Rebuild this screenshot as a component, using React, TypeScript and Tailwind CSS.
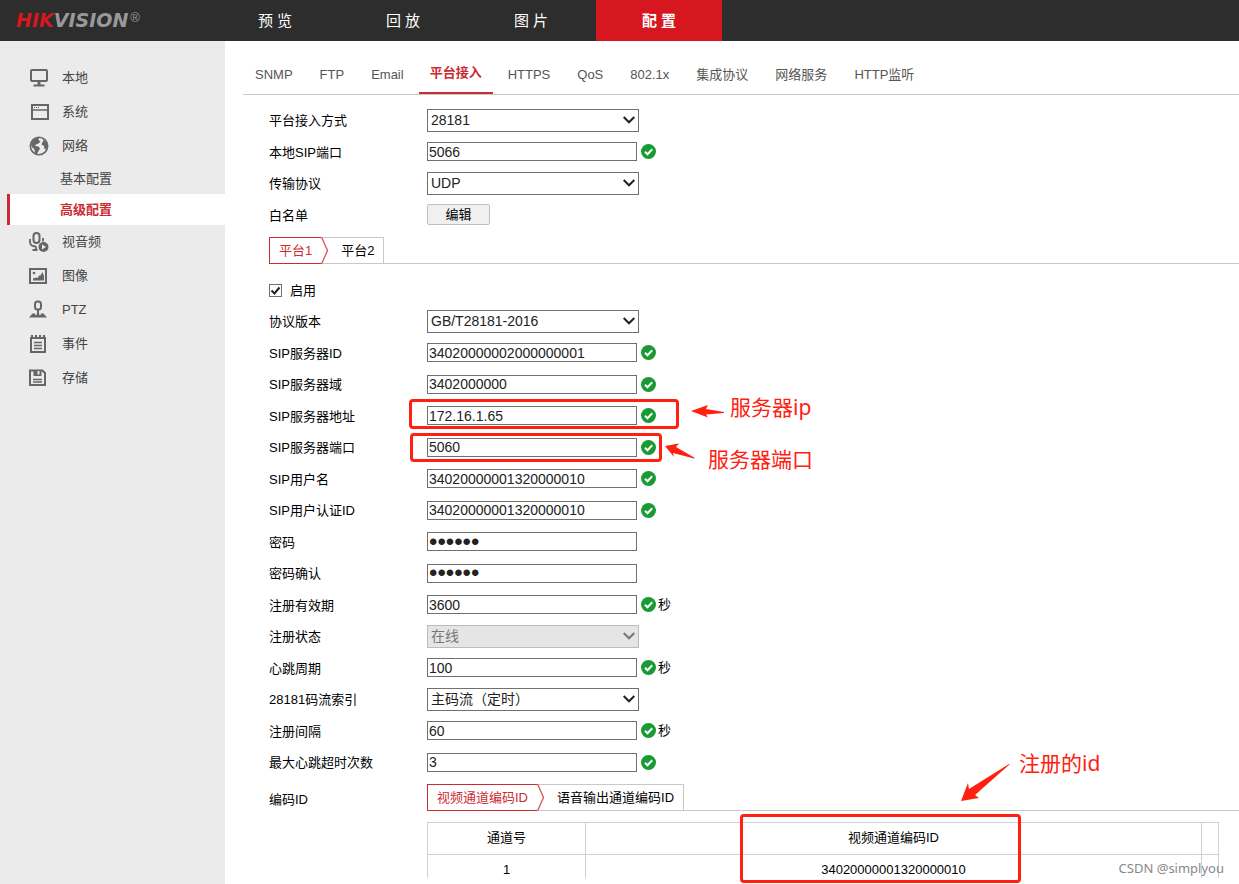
import { useState } from "react";
import type { ReactNode } from "react";

interface Field {
  id: string;
  label: string;
  type: "text" | "password" | "select";
  value: string;
  options?: string[];
  checked?: boolean;
  unit?: string;
  disabled?: boolean;
}

const NAV_ITEMS = ["预 览", "回 放", "图 片", "配 置"];

const SUB_TABS = [
  "SNMP",
  "FTP",
  "Email",
  "平台接入",
  "HTTPS",
  "QoS",
  "802.1x",
  "集成协议",
  "网络服务",
  "HTTP监听",
];

const ACCESS_FIELDS: Field[] = [
  { id: "access-mode", label: "平台接入方式", type: "select", value: "28181", options: ["28181"] },
  { id: "local-port", label: "本地SIP端口", type: "text", value: "5066", checked: true },
  { id: "protocol", label: "传输协议", type: "select", value: "UDP", options: ["UDP", "TCP"] },
];

const PLATFORM_FIELDS: Field[] = [
  { id: "version", label: "协议版本", type: "select", value: "GB/T28181-2016", options: ["GB/T28181-2016", "GB/T28181-2011"] },
  { id: "server-id", label: "SIP服务器ID", type: "text", value: "34020000002000000001", checked: true },
  { id: "server-domain", label: "SIP服务器域", type: "text", value: "3402000000", checked: true },
  { id: "server-address", label: "SIP服务器地址", type: "text", value: "172.16.1.65", checked: true },
  { id: "server-port", label: "SIP服务器端口", type: "text", value: "5060", checked: true },
  { id: "username", label: "SIP用户名", type: "text", value: "34020000001320000010", checked: true },
  { id: "auth-id", label: "SIP用户认证ID", type: "text", value: "34020000001320000010", checked: true },
  { id: "password", label: "密码", type: "password", value: "123456" },
  { id: "password-confirm", label: "密码确认", type: "password", value: "123456" },
  { id: "expires", label: "注册有效期", type: "text", value: "3600", checked: true, unit: "秒" },
  { id: "status", label: "注册状态", type: "select", value: "在线", options: ["在线", "离线"], disabled: true },
  { id: "heartbeat", label: "心跳周期", type: "text", value: "100", checked: true, unit: "秒" },
  { id: "stream", label: "28181码流索引", type: "select", value: "主码流（定时）", options: ["主码流（定时）", "子码流"] },
  { id: "interval", label: "注册间隔", type: "text", value: "60", checked: true, unit: "秒" },
  { id: "max-timeout", label: "最大心跳超时次数", type: "text", value: "3", checked: true },
];

function Icon({ children }: { children: ReactNode }) {
  return (
    <svg className="h-5 w-5 shrink-0" viewBox="0 0 20 20" fill="none" stroke="#666" strokeWidth="2" aria-hidden="true">
      {children}
    </svg>
  );
}

const monitorIcon = (
  <Icon>
    <rect x="2" y="2" width="16" height="11" rx="1" />
    <path d="M10 13v4" strokeWidth="3" />
    <path d="M4.500 17.500h11" />
  </Icon>
);

const windowIcon = (
  <Icon>
    <rect x="3" y="3" width="16" height="14" />
    <path d="M3 8h16" strokeWidth="1.500" />
    <path d="M5 5.500h5" strokeDasharray="1 1" strokeWidth="1" />
  </Icon>
);

const globeIcon = (
  <Icon>
    <circle cx="10" cy="10" r="8.700" strokeWidth="1.600" />
    <path
      d="M2 8l3-5 5-1.500-.5 2.500 2 1.500-2 2-2.500 1-1 1.500 3.500.5 1.500 2-2 3.500-1.500 2.500-1.500-1-.5-4-3-3zM13 2.500l4.500 4 1 4-1.500 3-1.500-.5-.5-3-2.500-1.500 1-2.500 1-1z"
      fill="#666"
      stroke="none"
    />
  </Icon>
);

const microphoneIcon = (
  <Icon>
    <rect x="4.500" y="1" width="6" height="10" rx="3" />
    <path d="M1 7v3c0 3 2 4.500 6 4.500M14 6v3.500M7 14.500v3.500M3.500 18h5" strokeWidth="1.800" />
    <circle cx="14.500" cy="15" r="5" fill="#666" stroke="none" />
    <path d="M13 12.500v5l4-2.500z" fill="#ebebeb" stroke="none" />
  </Icon>
);

const pictureIcon = (
  <Icon>
    <rect x="1" y="3" width="16" height="14" />
    <path d="M4 14.500v-2l3-1 2 .5 1-3 1 1 2.500-4 1.500 4v4.500z" fill="#666" stroke="none" />
    <circle cx="5" cy="7" r="1.300" fill="#666" stroke="none" />
  </Icon>
);

const joystickIcon = (
  <Icon>
    <rect x="6" y="1.500" width="6" height="8" rx="2.500" />
    <path d="M3.500 13.500h11l3.500 4H0z" fill="#666" stroke="none" />
    <path d="M6 14h6" stroke="#ebebeb" strokeWidth="1.500" />
    <path d="M9 10v5.500" />
  </Icon>
);

const notepadIcon = (
  <Icon>
    <rect x="2" y="4" width="14" height="14" />
    <path d="M3 1v3M7 1v3M11 1v3M15 1v3" />
    <path d="M5 8.500h8M5 11.500h8M5 14.500h8" strokeWidth="1.300" />
  </Icon>
);

const floppyIcon = (
  <Icon>
    <path d="M1 2.500h12.500L16 5v12H1z" />
    <path d="M4.500 2v6h8V2" fill="#666" stroke="none" />
    <path d="M9.500 3v3.500" stroke="#ebebeb" />
    <path d="M4 11.500h9M4 14h9" strokeWidth="1.500" />
  </Icon>
);

const TOP_MENU = [
  { label: "本地", icon: monitorIcon },
  { label: "系统", icon: windowIcon },
  { label: "网络", icon: globeIcon },
];

const BOTTOM_MENU = [
  { label: "视音频", icon: microphoneIcon },
  { label: "图像", icon: pictureIcon },
  { label: "PTZ", icon: joystickIcon },
  { label: "事件", icon: notepadIcon },
  { label: "存储", icon: floppyIcon },
];

function MenuItem({ label, icon }: { label: string; icon: ReactNode }) {
  return (
    <a href="#" className="flex h-[34px] items-center gap-[13px] pl-[29px] text-[#444]">
      {icon}
      {label}
    </a>
  );
}

function Sidebar() {
  return (
    <aside className="w-[225px] shrink-0 bg-[#ebebeb] pt-5">
      {TOP_MENU.map((item) => (
        <MenuItem key={item.label} {...item} />
      ))}
      <a href="#" className="flex h-[31px] items-center pl-[60px] text-[#444]">
        基本配置
      </a>
      <a
        href="#"
        className="ml-[7px] flex h-[31px] items-center border-l-3 border-[#cc2b33] bg-white pl-[50px] font-bold text-[#cc2b33]"
      >
        高级配置
      </a>
      {BOTTOM_MENU.map((item) => (
        <MenuItem key={item.label} {...item} />
      ))}
    </aside>
  );
}

function CheckMark() {
  return (
    <svg className="ml-1 h-[15px] w-[15px] shrink-0" viewBox="0 0 15 15" aria-hidden="true">
      <circle cx="7.500" cy="7.500" r="7.500" fill="#199b33" />
      <path d="M4 7.700l2.500 2.500 4.700-4.900" fill="none" stroke="#fff" strokeWidth="2" />
    </svg>
  );
}

function FieldRow({ field }: { field: Field }) {
  const [value, setValue] = useState(field.value);

  return (
    <div className="flex h-8 items-center even:h-[31px]">
      <label htmlFor={field.id} className="w-[158px] shrink-0 pt-0.5">
        {field.label}
      </label>
      {field.type === "select" ? (
        <div className="relative">
          <select
            id={field.id}
            value={value}
            disabled={field.disabled}
            onChange={(e) => setValue(e.target.value)}
            className="block h-[23px] w-[212px] appearance-none border border-[#707070] bg-white pl-[3px] text-sm leading-5 text-[#222] disabled:border-[#bbb] disabled:bg-[#e5e5e5] disabled:text-[#777]"
          >
            {field.options?.map((option) => (
              <option key={option}>{option}</option>
            ))}
          </select>
          <svg
            className="pointer-events-none absolute top-[7px] right-1 h-2 w-3"
            viewBox="0 0 12 8"
            fill="none"
            stroke={field.disabled ? "#777" : "#222"}
            strokeWidth="2"
            aria-hidden="true"
          >
            <path d="M.7 1L6 6.300 11.300 1" />
          </svg>
        </div>
      ) : (
        <input
          id={field.id}
          type={field.type}
          value={value}
          onChange={(e) => setValue(e.target.value)}
          className={
            field.type === "password"
              ? "h-[19px] w-[210px] border border-[#707070] pl-px text-2xl leading-4 text-[#222]"
              : "h-[19px] w-[210px] border border-[#707070] pl-px text-sm leading-4 text-[#222]"
          }
        />
      )}
      {field.checked && <CheckMark />}
      {field.unit && <span className="ml-0.5">{field.unit}</span>}
    </div>
  );
}

function StepTabs({ tabs }: { tabs: string[] }) {
  return (
    <div className="flex h-[27px] border-b border-[#c8c8c8]">
      <button className="-mb-px border-y border-l border-[#cc2b33] px-[9px] text-[#cc2b33]">{tabs[0]}</button>
      <svg className="-mb-px h-[27px] w-2 shrink-0" viewBox="0 0 8 27" fill="none" aria-hidden="true">
        <path d="M0 .5h8" stroke="#c8c8c8" />
        <path d="M.5 0L6.500 13.500.5 27" stroke="#d9545b" strokeWidth="1.300" />
      </svg>
      <button className="border-t border-r border-[#c8c8c8] pr-[9px] pl-3">{tabs[1]}</button>
    </div>
  );
}

function ChannelTable() {
  return (
    <div className="mt-[11px] mr-5 h-[56px] overflow-hidden">
      <table className="w-full table-fixed border-collapse border border-[#d0d0d0] text-center">
        <thead>
          <tr className="h-8">
            <th className="w-[158px] border border-[#d0d0d0] pb-0.5 font-normal">通道号</th>
            <th className="border border-[#d0d0d0] pb-0.5 font-normal">视频通道编码ID</th>
            <th className="w-[17px] border border-[#d0d0d0]" />
          </tr>
        </thead>
        <tbody>
          <tr className="h-8">
            <td className="border border-[#d0d0d0] pb-0.5">1</td>
            <td className="border border-[#d0d0d0] pb-0.5">34020000001320000010</td>
            <td className="border border-[#d0d0d0]" />
          </tr>
        </tbody>
      </table>
    </div>
  );
}

// Red boxes, arrows and notes lying over the form
function Annotations() {
  return (
    <div className="pointer-events-none absolute inset-0 overflow-hidden font-['Noto_Sans','Noto_Sans_CJK_SC',sans-serif] text-[21px] leading-7 whitespace-nowrap text-[#ff2010]">
      <div className="absolute top-[399px] left-[409px] h-[30px] w-[270px] rounded-sm border-3 border-[#ff2010]" />
      <div className="absolute top-[433px] left-[410px] h-[29px] w-[252px] rounded-sm border-3 border-[#ff2010]" />
      <div className="absolute top-[814px] left-[740px] h-[69px] w-[281px] rounded-sm border-3 border-[#ff2010]" />
      <svg className="absolute top-[404px] left-[691px] h-[14px] w-[33px]" viewBox="0 0 33 14" fill="#ff2010">
        <path d="M0 7L17 1l-2 4L33 8v1l-18 1.500 2 3z" />
      </svg>
      <svg className="absolute top-[443px] left-[665px] h-4 w-[30px]" viewBox="0 0 30 16" fill="#ff2010">
        <path d="M0 3L14 .5l-3 3.500 19 11-1 .6L8 10l1 4z" />
      </svg>
      <svg className="absolute top-[763px] left-[961px] h-[38px] w-[49px]" viewBox="0 0 49 38" fill="#ff2010">
        <path d="M0 38L7 20l1 6L48 1h1L14 32l4 3z" />
      </svg>
      <span className="absolute top-[393px] left-[730px]">服务器ip</span>
      <span className="absolute top-[445px] left-[708px]">服务器端口</span>
      <span className="absolute top-[749px] left-[1019px]">注册的id</span>
      <span className="absolute top-[858px] right-[15px] text-[13px] leading-5 text-[#888]">CSDN @simplyou</span>
    </div>
  );
}

export default function App() {
  const [enabled, setEnabled] = useState(true);

  return (
    <div className="relative flex min-h-screen flex-col bg-white font-['Liberation_Sans','Noto_Sans_CJK_SC',sans-serif] text-[13px] leading-5 text-black">
      <header className="flex h-[41px] bg-[#2d2d2d]">
        <div className="flex w-[212px] shrink-0 items-center pb-0.5 pl-4 font-['DejaVu_Sans',sans-serif] text-[19px] font-bold text-[#999] italic">
          <span className="text-[#d7171f]">HIK</span>
          <span>VISION</span>
          <span className="ml-0.5 pb-1 font-['Liberation_Sans',sans-serif] text-[13px] font-normal not-italic">®</span>
        </div>
        <nav className="flex gap-0.5 text-[15px]">
          {NAV_ITEMS.map((item, idx) => (
            <a
              key={item}
              href="#"
              className={`flex w-[126px] items-center justify-center text-white ${
                idx === 3 ? "bg-[#d7171f] font-bold" : ""
              }`}
            >
              {item}
            </a>
          ))}
        </nav>
      </header>

      <div className="flex flex-1">
        <Sidebar />
        <main className="min-w-0 flex-1 pl-[18px]">
          <nav className="flex h-[54px] gap-[3px] border-b border-[#c8c8c8]">
            {SUB_TABS.map((tab) => (
              <a
                key={tab}
                href="#"
                className={
                  tab === "平台接入"
                    ? "flex items-center border-b-2 border-[#cc2b33] px-[11px] pt-3 font-bold text-[#cc2b33]"
                    : "flex items-center px-3 pt-3.5 text-[#555]"
                }
              >
                {tab}
              </a>
            ))}
          </nav>

          <form className="pl-[26px]" onSubmit={(e) => e.preventDefault()}>
            <div className="pt-[9px]">
              {ACCESS_FIELDS.map((field) => (
                <FieldRow key={field.id} field={field} />
              ))}
              <div className="flex h-[31px] items-center">
                <span className="w-[158px] pt-0.5">白名单</span>
                <button className="h-[21px] w-[63px] rounded-xs border border-[#c0c0c0] bg-[#f0f0f0] leading-[19px]">
                  编辑
                </button>
              </div>
            </div>

            <div className="mt-[7px]">
              <StepTabs tabs={["平台1", "平台2"]} />
            </div>

            <label className="flex h-[41px] items-center gap-2 pt-3">
              <span className="relative flex">
                <input
                  type="checkbox"
                  checked={enabled}
                  onChange={(e) => setEnabled(e.target.checked)}
                  className="h-[13px] w-[13px] appearance-none border border-[#707070] bg-white"
                />
                {enabled && (
                  <svg
                    className="pointer-events-none absolute inset-0 h-[13px] w-[13px]"
                    viewBox="0 0 13 13"
                    fill="none"
                    stroke="#222"
                    strokeWidth="2"
                    aria-hidden="true"
                  >
                    <path d="M2.500 6.500L5.500 9.500l5-6" />
                  </svg>
                )}
              </span>
              启用
            </label>

            <div>
              {PLATFORM_FIELDS.map((field) => (
                <FieldRow key={field.id} field={field} />
              ))}
            </div>

            <div className="mt-1.5 flex">
              <div className="w-[158px] shrink-0 pt-1.5">编码ID</div>
              <div className="min-w-0 flex-1">
                <StepTabs tabs={["视频通道编码ID", "语音输出通道编码ID"]} />
                <ChannelTable />
              </div>
            </div>
          </form>
        </main>
      </div>

      <Annotations />
    </div>
  );
}
